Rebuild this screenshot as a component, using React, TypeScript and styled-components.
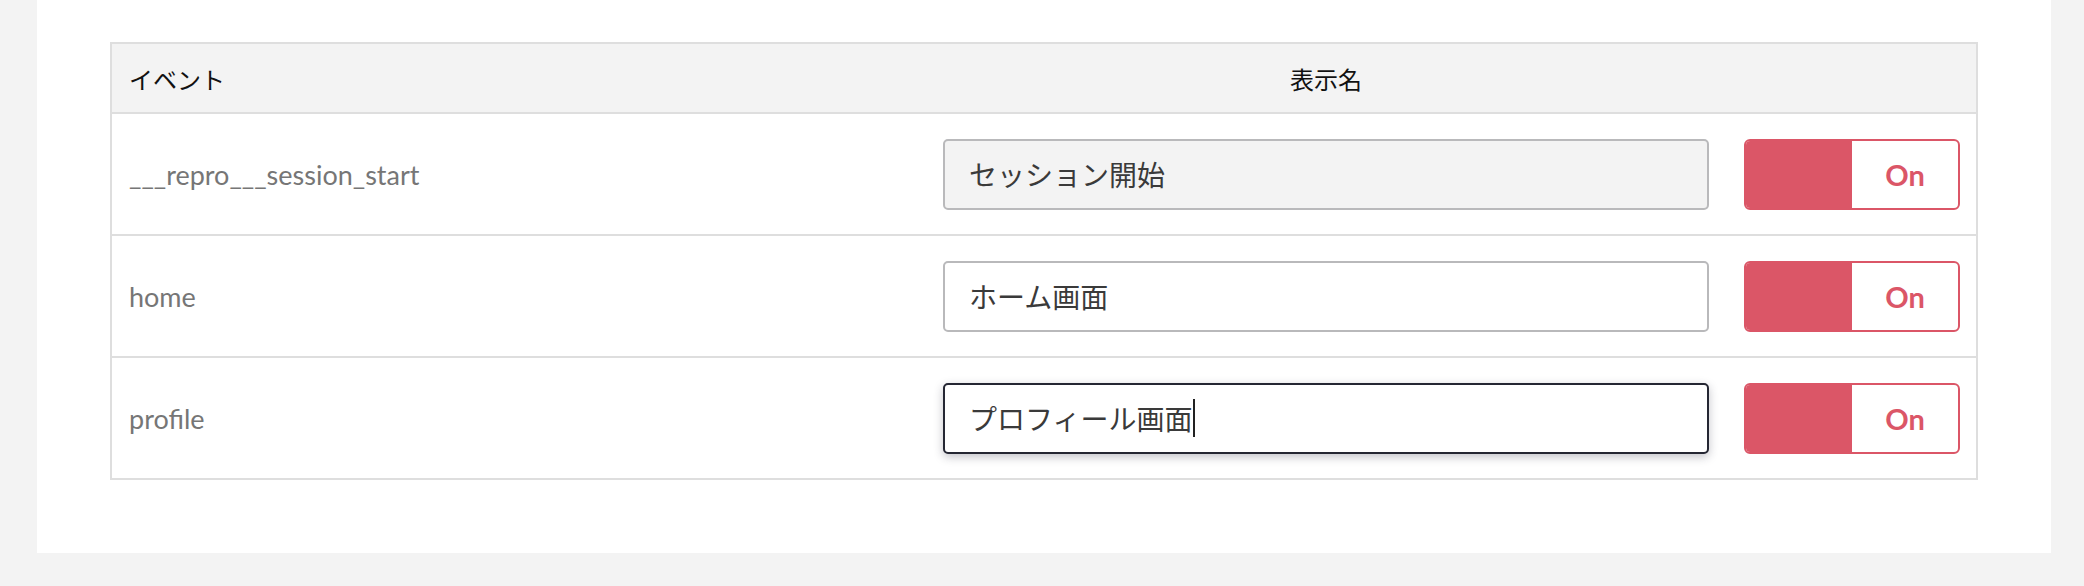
import React from "react";
import styled, { createGlobalStyle } from "styled-components";

const GlobalStyle = createGlobalStyle`
  html, body {
    margin: 0;
    padding: 0;
    background: #f3f3f3;
  }
  * { box-sizing: border-box; }
`;

const Panel = styled.div`
  margin-left: 37px;
  width: 2014px;
  background: #ffffff;
  padding: 42px 73px 73px 73px;
`;

const Table = styled.div`
  border: 2px solid #dedede;
  display: flex;
  flex-direction: column;
`;

const HeaderRow = styled.div`
  display: grid;
  grid-template-columns: 815px 798px 1fr;
  height: 70px;
  background: #f3f3f3;
  border-bottom: 2px solid #dedede;
  align-items: center;
`;

const HeaderCell = styled.div<{ $center?: boolean }>`
  font-family: "Noto Sans CJK JP", "Noto Sans", sans-serif;
  font-size: 24px;
  color: #111;
  padding-left: ${(p) => (p.$center ? "0" : "17px")};
  text-align: ${(p) => (p.$center ? "center" : "left")};
`;

const Row = styled.div<{ $last?: boolean }>`
  display: grid;
  grid-template-columns: 815px 798px 1fr;
  height: ${(p) => (p.$last ? "120px" : "122px")};
  border-bottom: ${(p) => (p.$last ? "none" : "2px solid #dedede")};
  align-items: center;
`;

const EventName = styled.div`
  font-family: Lato, "Noto Sans", sans-serif;
  font-size: 27px;
  color: #767676;
  padding-left: 17px;
`;

const NameCell = styled.div`
  padding: 0 16px;
`;

const Field = styled.div<{ $disabled?: boolean; $focused?: boolean }>`
  height: 71px;
  display: flex;
  align-items: center;
  padding-left: 24px;
  border-radius: 5px;
  border: 2px solid ${(p) => (p.$focused ? "#252733" : "#b9b9bb")};
  background: ${(p) => (p.$disabled ? "#f3f3f3" : "#ffffff")};
  box-shadow: ${(p) => (p.$focused ? "0 3px 10px rgba(40, 40, 60, 0.28)" : "none")};
  font-family: "Noto Sans CJK JP", "Noto Sans", sans-serif;
  font-size: 28px;
  color: #3a3a3a;
`;

const Caret = styled.span`
  display: inline-block;
  width: 1.5px;
  height: 38px;
  background: #222;
  margin-left: 1px;
`;

const ToggleCell = styled.div`
  display: flex;
  justify-content: flex-end;
  padding-right: 16px;
`;

const Toggle = styled.div`
  width: 216px;
  height: 71px;
  display: flex;
  border: 2px solid #db5667;
  border-radius: 6px;
  overflow: hidden;
  background: #ffffff;
`;

const Knob = styled.div`
  width: 106px;
  background: #db5667;
`;

const ToggleLabel = styled.div`
  flex: 1;
  display: flex;
  align-items: center;
  justify-content: center;
  font-family: Lato, "Noto Sans", sans-serif;
  font-weight: 700;
  font-size: 29px;
  color: #db5667;
`;

type Item = { event: string; name: string; disabled?: boolean; focused?: boolean };

const items: Item[] = [
  { event: "___repro___session_start", name: "セッション開始", disabled: true },
  { event: "home", name: "ホーム画面" },
  { event: "profile", name: "プロフィール画面", focused: true },
];

export default function App() {
  return (
    <>
      <GlobalStyle />
      <Panel>
        <Table>
          <HeaderRow>
            <HeaderCell>イベント</HeaderCell>
            <HeaderCell $center>表示名</HeaderCell>
            <div />
          </HeaderRow>
          {items.map((it, i) => (
            <Row key={it.event} $last={i === items.length - 1}>
              <EventName>{it.event}</EventName>
              <NameCell>
                <Field $disabled={it.disabled} $focused={it.focused}>
                  <span>{it.name}</span>
                  {it.focused && <Caret />}
                </Field>
              </NameCell>
              <ToggleCell>
                <Toggle>
                  <Knob />
                  <ToggleLabel>On</ToggleLabel>
                </Toggle>
              </ToggleCell>
            </Row>
          ))}
        </Table>
      </Panel>
    </>
  );
}
